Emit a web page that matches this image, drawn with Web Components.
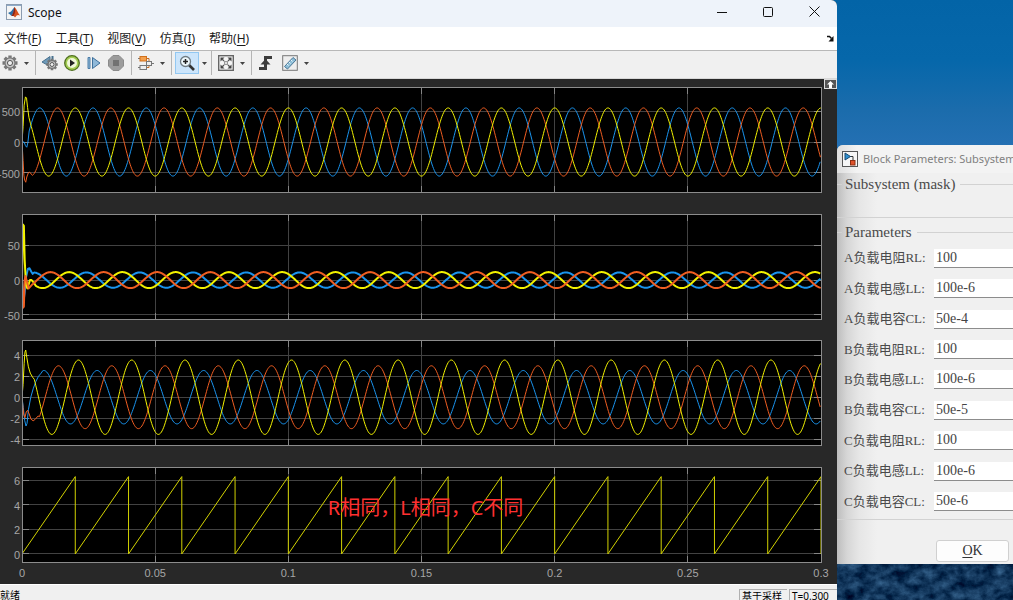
<!DOCTYPE html>
<html lang="zh-CN">
<head>
<meta charset="utf-8">
<title>Scope</title>
<style>
html,body{margin:0;height:100%;overflow:hidden}
body{font:12px/16px "Noto Sans","Noto Sans CJK SC",sans-serif;color:#111}
</style>
</head>
<body>
<desk-top>
  <scope-window slot="main"></scope-window>
  <block-dialog slot="side"></block-dialog>
</desk-top>
<script>
const define = (name, css, html, setup) => customElements.define(name, class extends HTMLElement {
  connectedCallback() {
    if (this.shadowRoot) return;
    const root = this.attachShadow({ mode: 'open' });
    const markup = typeof html === 'function' ? html(this) : html;
    root.innerHTML = `<style>*{box-sizing:border-box}${css}</style>${markup}`;
    if (setup) setup(this, root);
  }
});

/* Desktop: scope window on the left, dialog partly off the right edge */
define('desk-top', `
:host{display:grid;grid-template-columns:minmax(0,1fr) 176px;height:100vh;overflow:hidden;position:relative;
 background:linear-gradient(#0364a7 0,#0667aa 60px,#1b6cac 110px,#2470b3 145px,#16436f 400px,#0c2d50 564px)}
.rock{position:absolute;right:0;bottom:0;width:180px;height:40px}
slot{display:block;min-width:0;min-height:0;position:relative}
slot[name=side]{padding-top:145px}`, `
<svg class="rock" aria-hidden="true"><filter id="r" x="0" y="0" width="100%" height="100%" color-interpolation-filters="sRGB">
<feTurbulence type="fractalNoise" baseFrequency=".08 .1" numOctaves="5" seed="8"/>
<feColorMatrix values="0.4 0 0 0 -0.13  0.5 0 0 0 -0.04  0.55 0 0 0 0.08  0 0 0 0 1"/></filter>
<rect width="100%" height="100%" filter="url(#r)"/></svg>
<slot name="main"></slot><slot name="side"></slot>`);

define('scope-window', `
:host{display:flex;flex-direction:column;height:100vh;border-top-right-radius:6px;overflow:hidden;background:#282828}`, `
<title-bar></title-bar><menu-bar></menu-bar><tool-bar></tool-bar><plot-area></plot-area><status-bar></status-bar>`);

define('title-bar', `
:host{display:flex;height:27px;background:#eef3fa;align-items:center;padding-left:6px;flex:none}
svg{margin-bottom:4px}
span{margin:0 0 2px 6px;flex:1}
button{width:46px;height:27px;border:0;background:none;padding:0;display:grid;place-items:center}`, `
<svg width="16" height="16" viewBox="0 0 16 16"><rect x=".5" y=".5" width="15" height="15" fill="#f4f4f4" stroke="#8c9cb0"/><path d="M1 1.5h14" stroke="#8eabca"/><path d="M2 9 5 7.5 8.500 3l1 3-4 6-1.500-1.500z" fill="#2c6ea6"/><path d="M8.500 3c2 2 3.500 6 5.500 8.500-2-1-3-1-5 2-1-1.500-2-2-3.500-1.500C7 10 8 7 8.500 3z" fill="#d4501d"/><path d="M8.500 3c1 2 1 6-1 9l-2 0C7 10 8 7 8.500 3z" fill="#8a2418"/></svg>
<span>Scope</span>
<button aria-label="最小化"><svg width="10" height="10"><path d="M0 5.500h10" stroke="#111"/></svg></button>
<button aria-label="最大化"><svg width="10" height="10"><rect x=".5" y=".5" width="9" height="9" rx="1" fill="none" stroke="#111"/></svg></button>
<button aria-label="关闭"><svg width="11" height="11"><path d="M.5.5l10 10M10.500.5l-10 10" stroke="#111"/></svg></button>`);

define('menu-bar', `
:host{display:flex;height:24px;background:#fff;border-bottom:1px solid #b8b8b8;align-items:center;padding:0 3px 0 4px;flex:none}
nav{display:flex;gap:14px;flex:1}
a{color:#1a1a1a;text-decoration:none;white-space:nowrap}u{text-underline-offset:2px}`, `
<nav><a href="#file">文件(<u>F</u>)</a><a href="#tools">工具(<u>T</u>)</a><a href="#view">视图(<u>V</u>)</a><a href="#sim">仿真(<u>I</u>)</a><a href="#help">帮助(<u>H</u>)</a></nav>
<svg width="7" height="7" viewBox="0 0 7 7"><path d="M0 1.500h2.500L4.500 3.500" fill="none" stroke="#111" stroke-width="1.500"/><path d="M6.500 1v5.500H1.500z" fill="#111"/></svg>`);

const gear = (cx, cy, r) => {
  let p = '';
  for (let i = 0; i < 8; i++) {
    const a = i * Math.PI / 4, c = Math.cos(a), s = Math.sin(a);
    p += `M${cx + c * r * .7} ${cy + s * r * .7}L${cx + c * r} ${cy + s * r}`;
  }
  return `<path d="${p}" stroke="#777" stroke-width="${r * .45}"/><circle cx="${cx}" cy="${cy}" r="${r * .68}" fill="#c8c8c8" stroke="#707070" stroke-width="1.300"/><circle cx="${cx}" cy="${cy}" r="${r * .34}" fill="#f0f0f0" stroke="#555"/>`;
};
const icons = {
  gear: gear(8, 8, 7.5),
  back: `<path d="M0 7 8 1.500v10z" fill="#6f9ab8" stroke="#47708e"/><path d="M10.500 1v5" stroke="#47708e" stroke-width="2"/>` + gear(10, 9.500, 5.800),
  play: `<circle cx="8" cy="8" r="7.300" fill="#a3cd52" stroke="#4f6f1f" stroke-width="1.300"/><circle cx="8" cy="8" r="5" fill="#f0f8d8"/><path d="M6 4.500 11 8l-5 3.500z" fill="#222"/>`,
  step: `<path d="M2 2.500h2v11H2z" fill="#8fb8d8" stroke="#4c7ea8"/><path d="M6.500 2.500 14 8l-7.500 5.500z" fill="#8fb8d8" stroke="#3f709b"/>`,
  stop: `<path d="M5 .5h6L15.500 5v6L11 15.500H5L.5 11V5z" fill="#9c9c9c" stroke="#8b8b8b"/><path d="M5 5h6v6H5z" fill="#727272"/>`,
  blocks: `<path d="M8 3.500h3v3M8 12.500h3v-3" fill="none" stroke="#c46a20"/><path d="M0 3.500h3M0 12.500h3M13 8.500h3" stroke="#777"/><rect x="2" y="1.500" width="6.500" height="4.500" fill="#f4a04c" stroke="#d0701c"/><rect x="2" y="10.500" width="6.500" height="4" fill="#eee" stroke="#777"/><rect x="8.500" y="6.500" width="5" height="4" fill="#eee" stroke="#777"/>`,
  zoom: `<path d="m10 10 5 5" stroke="#333" stroke-width="2.600"/><circle cx="6.500" cy="6.500" r="5" fill="#eef8fc" stroke="#6f7c84" stroke-width="1.300"/><path d="M4 6.500h5M6.500 4v5" stroke="#222" stroke-width="1.500"/>`,
  fit: `<rect x=".7" y=".7" width="14.600" height="14.600" fill="#f4f4f4" stroke="#666" stroke-width="1.400"/><path d="M2.500 2.500h4l-4 4zM13.500 2.500h-4l4 4zM2.500 13.500h4l-4-4zM13.500 13.500h-4l4-4z" fill="#444"/><path d="m4 4 2 2m6-2-2 2m-6 6 2-2m6 2-2-2" stroke="#555" stroke-width="1.300"/><rect x="6.500" y="6.500" width="3" height="3" fill="#ddd" stroke="#999"/>`,
  trigger: `<path d="M1 13.500h6.500v-11H14" fill="none" stroke="#3c3c3c" stroke-width="3"/><path d="M2.500 9.500 7.500 4l5 5.500z" fill="#3c3c3c"/>`,
  ruler: `<rect x=".7" y=".7" width="14.600" height="14.600" fill="#eee" stroke="#777"/><path d="m2.500 11.500 8.500-9 3 2.500-8.500 9z" fill="#8fbfd8" stroke="#4b7897"/><path d="m5 9 1.500 1.500M7 7l1.500 1.500M9 5l1.500 1.500" stroke="#eaf6fc"/>`
};
define('tool-bar', `
:host{display:flex;height:28px;background:#f0f0f0;border-bottom:1px solid #d8d8d8;align-items:center;padding:0 0 3px 2px;flex:none}
button{border:0;background:none;padding:0;width:16px;height:22px;display:grid;place-items:center;flex:none}
button.on{width:24px;background:#cce5fb;border:1px solid #93c8f2;margin:0 -1px}
button.on+.drop{width:13px}
.drop{width:17px}.drop svg{display:block}
hr{width:1px;height:24px;border:0;background:#b4b4b4;margin:0 6px 0 0}
hr.tight{margin-right:4px}
.g{display:flex;gap:6px;margin-right:7px;align-items:center}.g.last{gap:8px;margin-right:0}`, () => {
  const b = (n, label, on) => `<button${on ? ' class="on"' : ''} aria-label="${label}"><svg width="16" height="16" viewBox="0 0 16 16">${icons[n]}</svg></button>`;
  const d = `<button class="drop" aria-label="更多"><svg width="5" height="3"><path d="M0 0h5L2.500 3z" fill="#444"/></svg></button>`;
  return `${b('gear', '配置')}${d}<hr>
<div class="g">${b('back', '步退')}${b('play', '运行')}${b('step', '步进')}${b('stop', '停止')}</div><hr>
${b('blocks', '高亮模块')}${d}<hr class="tight">${b('zoom', '放大', 1)}${d}<hr>
${b('fit', '缩放')}${d}<hr>
<div class="g last">${b('trigger', '触发器')}${b('ruler', '测量')}</div>${d}`;
});

/* Signals: a few settling samples, then a steady cosine {amp, peak time} */
const Y = '#f2f200', O = '#f05e22', B = '#1a94ee';
const charts = {
  voltage: { max: 896, min: -826, ticks: [500, 0, -500], w: 1, traces: [
    [B, 555, .00667, [[0,0],[.0008,0],[.0013,-60],[.0018,-85],[.0022,-10],[.0027,180]]],
    [O, 555, .01333, [[0,0],[.0004,-300],[.0007,-540],[.001,-620],[.0014,-655],[.0018,-570],[.0024,-500],[.0029,-490],[.0034,-520]]],
    [Y, 555, .02, [[0,0],[.0004,250],[.0008,600],[.0013,735],[.0017,715],[.0021,560],[.0026,400]]]] },
  current: { max: 95, min: -57, ticks: [50, 0, -50], w: 2, traces: [
    [B, 11, .0042, [[0,0],[.0006,-30],[.001,-18],[.0015,4],[.0022,16],[.0028,17],[.0035,12],[.004,9]]],
    [Y, 11.5, .0177, [[0,0],[.0003,80],[.0007,78],[.001,30],[.0015,-8],[.002,-12],[.003,0],[.0036,0],[.0045,-4]]],
    [O, 11.5, .0107, [[0,0],[.0003,-40],[.0007,-38],[.001,0],[.0013,6],[.0019,-3],[.0025,-12],[.0032,-9]]]] },
  load: { max: 5.46, min: -4.63, ticks: [4, 2, 0, -2, -4], w: 1, traces: [
    [B, 2.55, .0082, [[0,0],[.0005,-1],[.001,-2.2],[.0015,-2.75],[.0019,-2.5],[.0024,-1.2],[.0033,0],[.0042,.8],[.0052,1.5],[.0062,2],[.0072,2.3]]],
    [O, 3, .0137, [[0,0],[.0006,-1.6],[.0011,-1.95],[.0016,-1.4],[.0021,-1.25],[.0027,-1.6],[.0034,-2.1],[.0042,-2.25],[.005,-2.1],[.006,-1.8]]],
    [Y, 3.55, .0212, [[0,0],[.0004,1.2],[.0008,3.2],[.0011,4.3],[.0014,4.5],[.0018,3.8],[.0024,2.9],[.0031,2.3],[.004,1.9]]]] },
  angle: { max: 7.06, min: -.72, ticks: [6, 4, 2, 0], w: 1, axis: true, saw: true }
};
define('scope-plot', `
:host{display:block;position:relative;min-height:0}
svg{display:block;width:100%;height:100%;overflow:visible}
svg svg{overflow:hidden}
line,rect{shape-rendering:crispEdges}
text{font:11px "Liberation Sans",sans-serif;fill:#a6a6a6}
polyline{fill:none;vector-effect:non-scaling-stroke;stroke-linejoin:round}
.note{position:absolute;inset:0;display:grid;place-items:center;padding:0 0 14px 8px;pointer-events:none}`, el => {
  const c = charts[el.getAttribute('data')], H = 100, W = 3000;
  const yp = v => (c.max - v) / (c.max - c.min) * H;
  let g = '', t = '';
  for (const v of c.ticks) {
    const y = yp(v) + '%';
    g += `<line x1="0" x2="100%" y1="${y}" y2="${y}" stroke="#424242"/><line x1="0" x2="7" y1="${y}" y2="${y}" stroke="#858585"/><svg x="100%" style="overflow:visible"><line x1="-7" x2="0" y1="${y}" y2="${y}" stroke="#858585"/></svg>`;
    t += `<text x="-2" y="${y}" dy="5" text-anchor="end">${v}</text>`;
  }
  for (let i = 0; i <= 6; i++) {
    const x = i / 6 * 100 + '%';
    g += `<line x1="${x}" x2="${x}" y1="0" y2="100%" stroke="#424242"/><line x1="${x}" x2="${x}" y1="0" y2="7" stroke="#858585"/><svg y="100%" style="overflow:visible"><line x1="${x}" x2="${x}" y1="-7" y2="0" stroke="#858585"/></svg>`;
    if (c.axis) t += `<text x="${x}" y="100%" dy="14" text-anchor="middle">${+(i * .05).toFixed(2)}</text>`;
  }
  const line = (pts, col) => `<polyline stroke="${col}" stroke-width="${c.w}" points="${pts.map(([s, v]) => (s / .3 * W).toFixed(1) + ',' + yp(v).toFixed(2)).join(' ')}"/>`;
  let s = '';
  if (c.saw) {
    const pts = [];
    for (let k = 0; k < 15; k++) pts.push([k * .02, 0], [(k + 1) * .02, 6.28]);
    pts.push([.3, 0]);
    s = line(pts, '#d2d200');
  } else for (const [col, amp, peak, start] of c.traces) {
    const pts = start.slice();
    for (let x = start[start.length - 1][0] + .0006; x <= .3; x += .0003) pts.push([x, amp * Math.cos((x - peak) * Math.PI * 100)]);
    s += line(pts, col);
  }
  return `<svg role="img"><rect width="100%" height="100%"/>${g}
<svg viewBox="0 0 ${W} ${H}" preserveAspectRatio="none" width="100%" height="100%">${s}</svg>
<rect width="100%" height="100%" fill="none" stroke="#8c8c8c"/>${t}</svg><div class="note"><slot></slot></div>`;
});

define('plot-area', `
:host{display:grid;flex:1;min-height:0;grid-template-rows:106fr 106fr 106fr 96fr;gap:21px;padding:8px 16px 21px 22px;
 background:#282828;position:relative;overflow:hidden}
button{position:absolute;right:0;top:0;width:13px;height:10px;padding:0;border:1px solid #ddd;background:#555;display:grid;place-items:center}
mark{background:none;color:#ff3030;font:20px/24px "Noto Sans","Noto Sans CJK SC",sans-serif;white-space:nowrap}`, `
<scope-plot data="voltage"></scope-plot><scope-plot data="current"></scope-plot><scope-plot data="load"></scope-plot>
<scope-plot data="angle"><mark>R相同，L相同，C不同</mark></scope-plot>
<button aria-label="最大化坐标区"><svg width="9" height="7"><path d="M4.500 0 8 3.500H6V7H3V3.500H1z" fill="#fff"/></svg></button>`);

define('status-bar', `
:host{display:flex;height:16px;background:#f0f0f0;border-top:1px solid #fff;padding-top:4px;gap:2px;flex:none;font-size:10px;line-height:12px;color:#000}
span{white-space:nowrap;flex:none}
.s{flex:1}
.b{border:1px solid #b0b0b0;border-width:1px 0 0 1px;padding:0 2px;width:48px;height:13px}`, `
<span class="s">就绪</span><span class="b">基于采样</span><span class="b">T=0.300</span>`);

define('param-row', `
:host{display:grid;grid-template-columns:90px 1fr;align-items:center}
label{font:13px/18px "Liberation Serif","Noto Sans CJK SC",serif;color:#4a4a4a;white-space:nowrap}
input{font:14px/18px "Liberation Serif",serif;color:#444;width:100%;min-width:0;height:19px;border:0;border-bottom:1px solid #8c8c8c;background:#fff;padding:0 2px;border-radius:0}`,
  el => `<label for="v">${el.getAttribute('label')}:</label><input id="v" value="${el.getAttribute('value')}">`);

define('block-dialog', `
:host{display:block;height:419px;background:linear-gradient(90deg,#bdbdbd,#d6d6d6 10px,#e6e6e6 22px,#f0f0f0 40px);border-top-left-radius:6px;overflow:hidden;color:#4a4a4a}
header{display:flex;height:28px;gap:5px;padding-left:5px;align-items:center;white-space:nowrap;font:11px/16px "Noto Sans",sans-serif;color:#808080;background:linear-gradient(90deg,#dedede,#f3f3f3 20px);margin-bottom:3px}
header svg{flex:none}
fieldset{margin:0;min-width:0;border:solid #d2d2d2;border-width:1px 0;padding:0 0 0 7px}
legend{font:15px/16px "Liberation Serif",serif;padding:0 5px 0 3px;margin-left:-2px}
.mask{height:42px;margin-bottom:6px}
.params{height:296px;padding-top:3px;padding-bottom:2px;display:grid;grid-auto-rows:1fr}
footer{padding:20px 4px 0 99px}
button{display:block;width:100%;height:22px;border:1px solid #d0d0d0;border-radius:3px;background:#fdfdfd;font:14px/18px "Liberation Serif",serif;color:#333;padding:0}
u{text-underline-offset:2px}`, () => `
<header><svg width="16" height="16" viewBox="0 0 16 16"><rect x=".5" y=".5" width="15" height="15" fill="#f6f6f6" stroke="#555"/><path d="M8 5.500h3V9" fill="none" stroke="#333"/><path d="m3 2 5.500 3.500L3 9z" fill="#2e8fd0" stroke="#17486e"/><rect x="8.500" y="9.500" width="4.500" height="4.500" fill="#e0522a" stroke="#8c2e12"/></svg><span>Block Parameters: Subsystem</span></header>
<fieldset class="mask"><legend>Subsystem (mask)</legend></fieldset>
<fieldset class="params"><legend>Parameters</legend>
${[['A', 4], ['B', 5], ['C', 6]].map(([p, c]) => `<param-row label="${p}负载电阻RL" value="100"></param-row><param-row label="${p}负载电感LL" value="100e-6"></param-row><param-row label="${p}负载电容CL" value="50e-${c}"></param-row>`).join('')}
</fieldset>
<footer><button><u>O</u>K</button></footer>`);
</script>
</body>
</html>
